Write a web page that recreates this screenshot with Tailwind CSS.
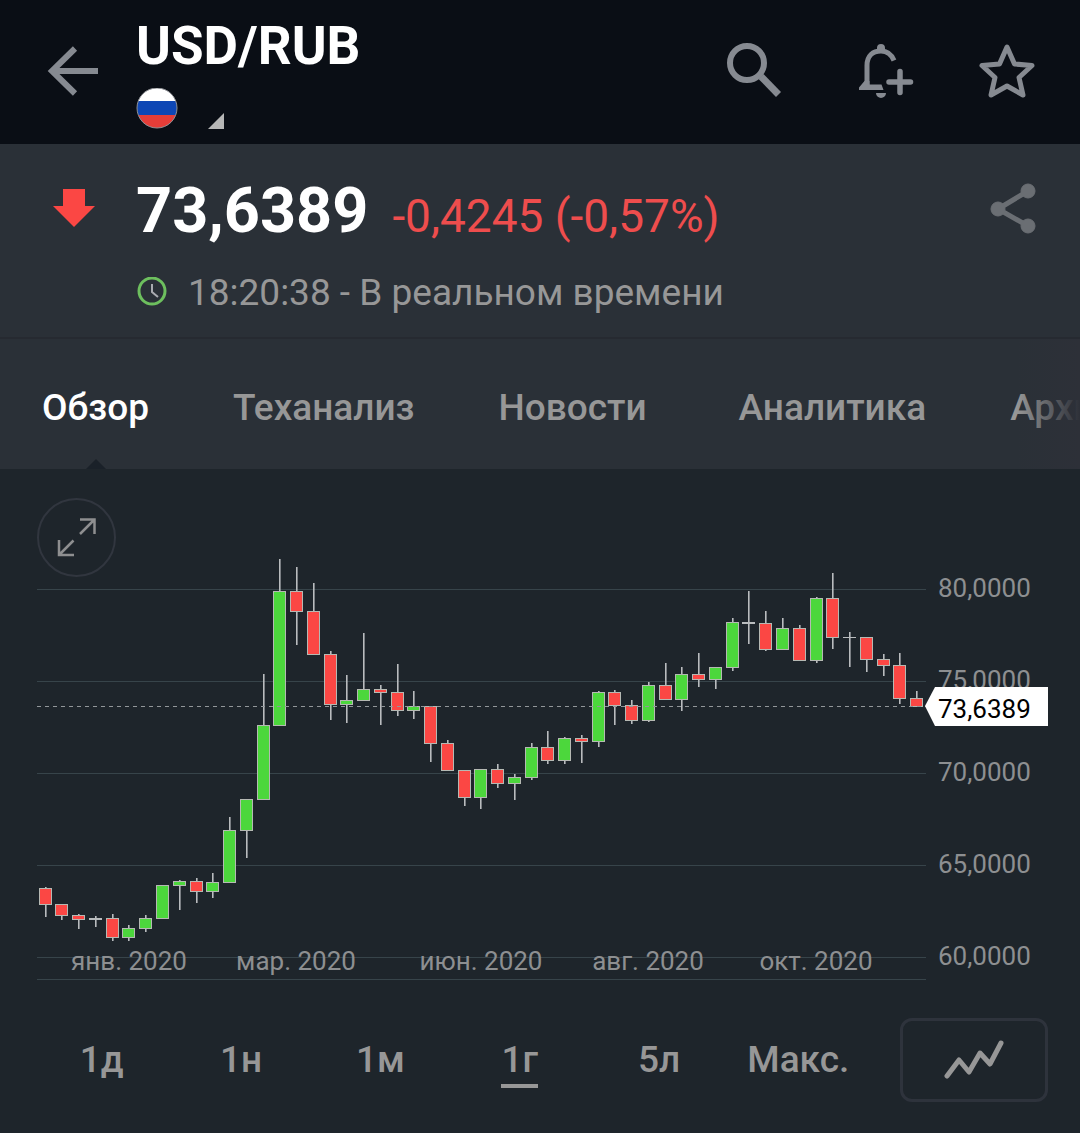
<!DOCTYPE html>
<html lang="ru">
<head>
  <meta charset="UTF-8">
  <meta name="viewport" content="width=device-width, initial-scale=1.0">
  <title>USD/RUB</title>
  <script src="https://cdn.jsdelivr.net/npm/@tailwindcss/browser@4"></script>
</head>
<body class="min-h-screen overflow-x-hidden bg-[#1e252b] font-[Roboto,sans-serif] text-[#979797]">
  <header class="flex h-36 items-start bg-[#0a0e15] text-[#868a91]">
    <button aria-label="Назад" class="mt-11 ml-11 shrink-0">
      <svg class="size-14" viewBox="0 0 56 56" fill="none" stroke="currentColor" stroke-width="6">
        <path d="M54 27H8M31 4.500L8 27L31 49.500"/>
      </svg>
    </button>
    <div class="ml-9 flex flex-1 flex-col">
      <h1 class="mt-4 text-[53px] leading-[60px] font-bold text-white">USD/RUB</h1>
      <button aria-label="Выбрать рынок" class="mt-3 flex items-end gap-[30px] self-start">
        <svg class="h-[41px] w-[42px]" viewBox="0 0 42 41">
          <clipPath id="flag"><circle cx="21" cy="20" r="20"/></clipPath>
          <g clip-path="url(#flag)">
            <path fill="#fff" d="M0 0h42v13H0z"/>
            <path fill="#0e47b5" d="M0 13h42v14H0z"/>
            <path fill="#e53d38" d="M0 27h42v14H0z"/>
          </g>
          <circle cx="21" cy="20" r="20" fill="none" stroke="#8f9196"/>
        </svg>
        <svg class="size-4" viewBox="0 0 16 16"><path fill="#b7b7b7" d="M16 0v16H0z"/></svg>
      </button>
    </div>
    <div class="mt-10 mr-11 flex shrink-0 items-start">
      <button aria-label="Поиск" class="mr-[70px]">
        <svg class="size-16" viewBox="0 0 64 64" fill="none" stroke="currentColor">
          <circle cx="25" cy="23" r="17" stroke-width="6"/>
          <path stroke-width="7" d="M39 36.500L56.500 54.500"/>
        </svg>
      </button>
      <button aria-label="Добавить уведомление" class="mr-[52px]">
        <svg class="size-16" viewBox="0 0 64 64" fill="none" stroke="currentColor">
          <path stroke-width="5" d="M11 46V25.500C11 15.500 17 11 25 11Q34 11 38 20.500"/>
          <path fill="currentColor" stroke="none" d="M21 12V8a4 4 0 0 1 8 0v4zM8.500 41H13.500V44.500H25.500L27.500 50H3v-2.500zM20 53h10a5 5 0 0 1-10 0z"/>
          <path stroke-width="5.500" stroke-linecap="round" d="M33 42H54.500M44 31.500V52.500"/>
        </svg>
      </button>
      <button aria-label="В избранное">
        <svg class="size-16" viewBox="0 0 64 64" fill="none" stroke="currentColor" stroke-width="5" stroke-linejoin="round">
          <path d="M35 7L42.500 24L60 25.500L47 37.500L51 55L35 46L19 55L23 37.500L10 25.500L27.500 24Z"/>
        </svg>
      </button>
    </div>
  </header>

  <section class="flex items-start border-b-2 border-[#262a31] bg-[#2a3037]">
    <svg class="mt-11 ml-[52px] h-10 w-11 shrink-0" viewBox="0 0 44 40"><path fill="#fb4744" d="M11 1h22v17h10L22 39L1 18h10z"/></svg>
    <div class="ml-10 flex flex-1 flex-col">
      <div class="flex items-baseline gap-6 pt-[29px]">
        <span class="text-[63px] leading-[76px] font-bold text-white">73,6389</span>
        <span class="text-[46px] leading-[52px] text-[#ee4d4d]">-0,4245 (-0,57%)</span>
      </div>
      <div class="mt-[22px] mb-[22px] flex h-11 items-center gap-5">
        <svg class="size-8" viewBox="0 0 32 32" fill="none">
          <circle cx="16" cy="14" r="13" stroke="#6dbf5e" stroke-width="3"/>
          <path stroke="#a9abb0" stroke-width="2" d="M16 7v8l6 5"/>
        </svg>
        <span class="text-[37px]">18:20:38 - В реальном времени</span>
      </div>
    </div>
    <button aria-label="Поделиться" class="mt-9 mr-10">
      <svg class="size-14" viewBox="0 0 56 56" fill="#6a6e73" stroke="#6a6e73">
        <path fill="none" stroke-width="5" d="M44 11L14 29L44 46"/>
        <circle cx="44" cy="11" r="7"/><circle cx="14" cy="29" r="7"/><circle cx="44" cy="46" r="7"/>
      </svg>
    </button>
  </section>

  <nav class="relative flex h-[130px] gap-[84px] overflow-hidden bg-[#2a3037] pt-[43px] pl-[42px] text-[37px] leading-[52px] font-medium whitespace-nowrap">
    <a href="#overview" aria-current="page" class="relative text-white">Обзор
      <svg class="absolute bottom-0 left-1/2 h-[10px] w-5 -translate-x-1/2" viewBox="0 0 20 10"><path fill="#1a2129" d="M0 10L10 0L20 10z"/></svg>
    </a>
    <a href="#technical">Теханализ</a>
    <a href="#news">Новости</a>
    <a href="#analysis" class="pl-2">Аналитика</a>
    <a href="#archive">Архив</a>
    <span class="pointer-events-none absolute inset-y-0 right-0 w-16 bg-linear-to-r from-[#2a3037]/0 to-[#2d3038]"></span>
  </nav>

  <main>
    <div class="relative">
      <button aria-label="На весь экран" class="absolute top-[29px] left-[37px] size-[79px] rounded-full border-2 border-[#31363f]">
        <svg class="size-full" viewBox="0 0 75 75" fill="none" stroke="#8e8f90" stroke-width="2.500">
          <path d="M41 19.500H55.500V34M55.500 19.500L41 34M20 40V55H35M20 55L34.500 40.500"/>
        </svg>
      </button>
      <svg id="chart" class="block w-full" viewBox="0 469 1080 520" font-size="26" fill="#8d8f91"></svg>
    </div>

    <div class="flex items-start gap-8 px-8 pt-[29px] pb-[31px]">
      <div class="grid flex-1 grid-cols-6 items-start pt-[18px] text-[37px] leading-[48px] font-medium">
        <button>1д</button>
        <button>1н</button>
        <button>1м</button>
        <button aria-pressed="true" class="mx-auto w-fit border-b-4 border-[#979797]">1г</button>
        <button>5л</button>
        <button>Макс.</button>
      </div>
      <button aria-label="Тип графика" class="flex h-[84px] w-[148px] items-center justify-center rounded-xl border-3 border-[#2e333c]">
        <svg class="h-10 w-[60px]" viewBox="0 0 60 40" fill="none" stroke="#979797" stroke-width="5" stroke-linecap="round" stroke-linejoin="round">
          <path d="M3 36L15 20L25 32L36 13L46 24L57 3"/>
        </svg>
      </button>
    </div>
  </main>

  <script>
    // One candle a week: [high, body top, body bottom, low, direction]
    // u = up, d = down, n = unchanged
    const candles = [
      [887, 888, 905, 917, 'd'], [904, 904, 916, 920, 'd'], [914, 915, 920, 929, 'd'], [916, 918, 920, 927, 'n'],
      [914, 918, 938, 941, 'd'], [925, 928, 938, 941, 'u'], [915, 918, 929, 932, 'u'], [885, 885, 919, 919, 'u'],
      [880, 881, 886, 910, 'u'], [878, 881, 892, 903, 'd'], [873, 882, 892, 898, 'u'], [817, 830, 883, 883, 'u'],
      [799, 799, 831, 858, 'u'], [674, 725, 800, 800, 'u'], [559, 591, 726, 726, 'u'], [567, 591, 612, 645, 'd'],
      [583, 611, 655, 655, 'd'], [651, 654, 705, 720, 'd'], [675, 700, 705, 723, 'u'], [633, 689, 701, 701, 'u'],
      [685, 689, 693, 725, 'd'], [664, 692, 711, 716, 'd'], [691, 706, 711, 719, 'u'], [706, 706, 744, 762, 'd'],
      [740, 743, 771, 771, 'd'], [770, 770, 798, 806, 'd'], [769, 769, 798, 809, 'u'], [764, 769, 784, 788, 'd'],
      [774, 777, 784, 800, 'u'], [743, 747, 778, 780, 'u'], [731, 747, 761, 764, 'd'], [737, 738, 761, 764, 'u'],
      [735, 738, 742, 763, 'd'], [691, 692, 742, 747, 'u'], [690, 692, 706, 725, 'd'], [700, 705, 721, 724, 'd'],
      [682, 685, 721, 722, 'u'], [663, 685, 700, 700, 'd'], [667, 674, 700, 711, 'u'], [653, 674, 680, 687, 'd'],
      [667, 667, 680, 689, 'u'], [618, 622, 668, 671, 'u'], [591, 622, 624, 644, 'n'], [611, 623, 650, 651, 'd'],
      [618, 628, 650, 650, 'u'], [625, 628, 661, 661, 'd'], [597, 598, 661, 663, 'u'], [573, 598, 638, 649, 'd'],
      [632, 637, 638, 667, 'n'], [637, 637, 660, 672, 'd'], [654, 659, 666, 676, 'd'], [653, 665, 699, 704, 'd'],
      [691, 698, 707, 707, 'd']
    ];
    const fills = { u: '#4cd73c', d: '#fb4744', n: '#b9bcbe' };
    const prices = [['80,0000', 589], ['75,0000', 681], ['70,0000', 773], ['65,0000', 865], ['60,0000', 957]];
    const months = [['янв. 2020', 129], ['мар. 2020', 296], ['июн. 2020', 481], ['авг. 2020', 648], ['окт. 2020', 816]];

    let out = '';
    prices.forEach(([label, y]) => {
      out += `<path stroke="#37444a" d="M37 ${y + 0.5}H926"/><text x="938" y="${y + 8}">${label}</text>`;
    });
    out += '<path stroke="#37444a" d="M37 979.5H926"/>';

    candles.forEach(([high, top, bottom, low, dir], i) => {
      const x = Math.round(38.7 + i * 16.757);
      out += `<rect x="${x + 6}" y="${high}" width="1.6" height="${low - high}" fill="#b9bcbe"/>`;
      if (dir === 'n') {
        out += `<rect x="${x}" y="${top}" width="13" height="${bottom - top}" fill="${fills.n}"/>`;
      } else {
        out += `<rect x="${x + 0.5}" y="${top + 0.5}" width="12" height="${bottom - top - 1}" fill="${fills[dir]}" stroke="#b5b9b3"/>`;
      }
    });

    months.forEach(([label, x]) => {
      out += `<text x="${x}" y="970" text-anchor="middle">${label}</text>`;
    });

    // last price line and its tag
    out += '<path stroke="#92979a" stroke-dasharray="4 4" d="M37 706.5H926"/>';
    out += '<path fill="#fff" d="M925 706L935 687H1048V726H935Z"/>';
    out += '<text x="938" y="718" fill="#000">73,6389</text>';
    document.getElementById('chart').innerHTML = out;
  </script>
</body>
</html>
